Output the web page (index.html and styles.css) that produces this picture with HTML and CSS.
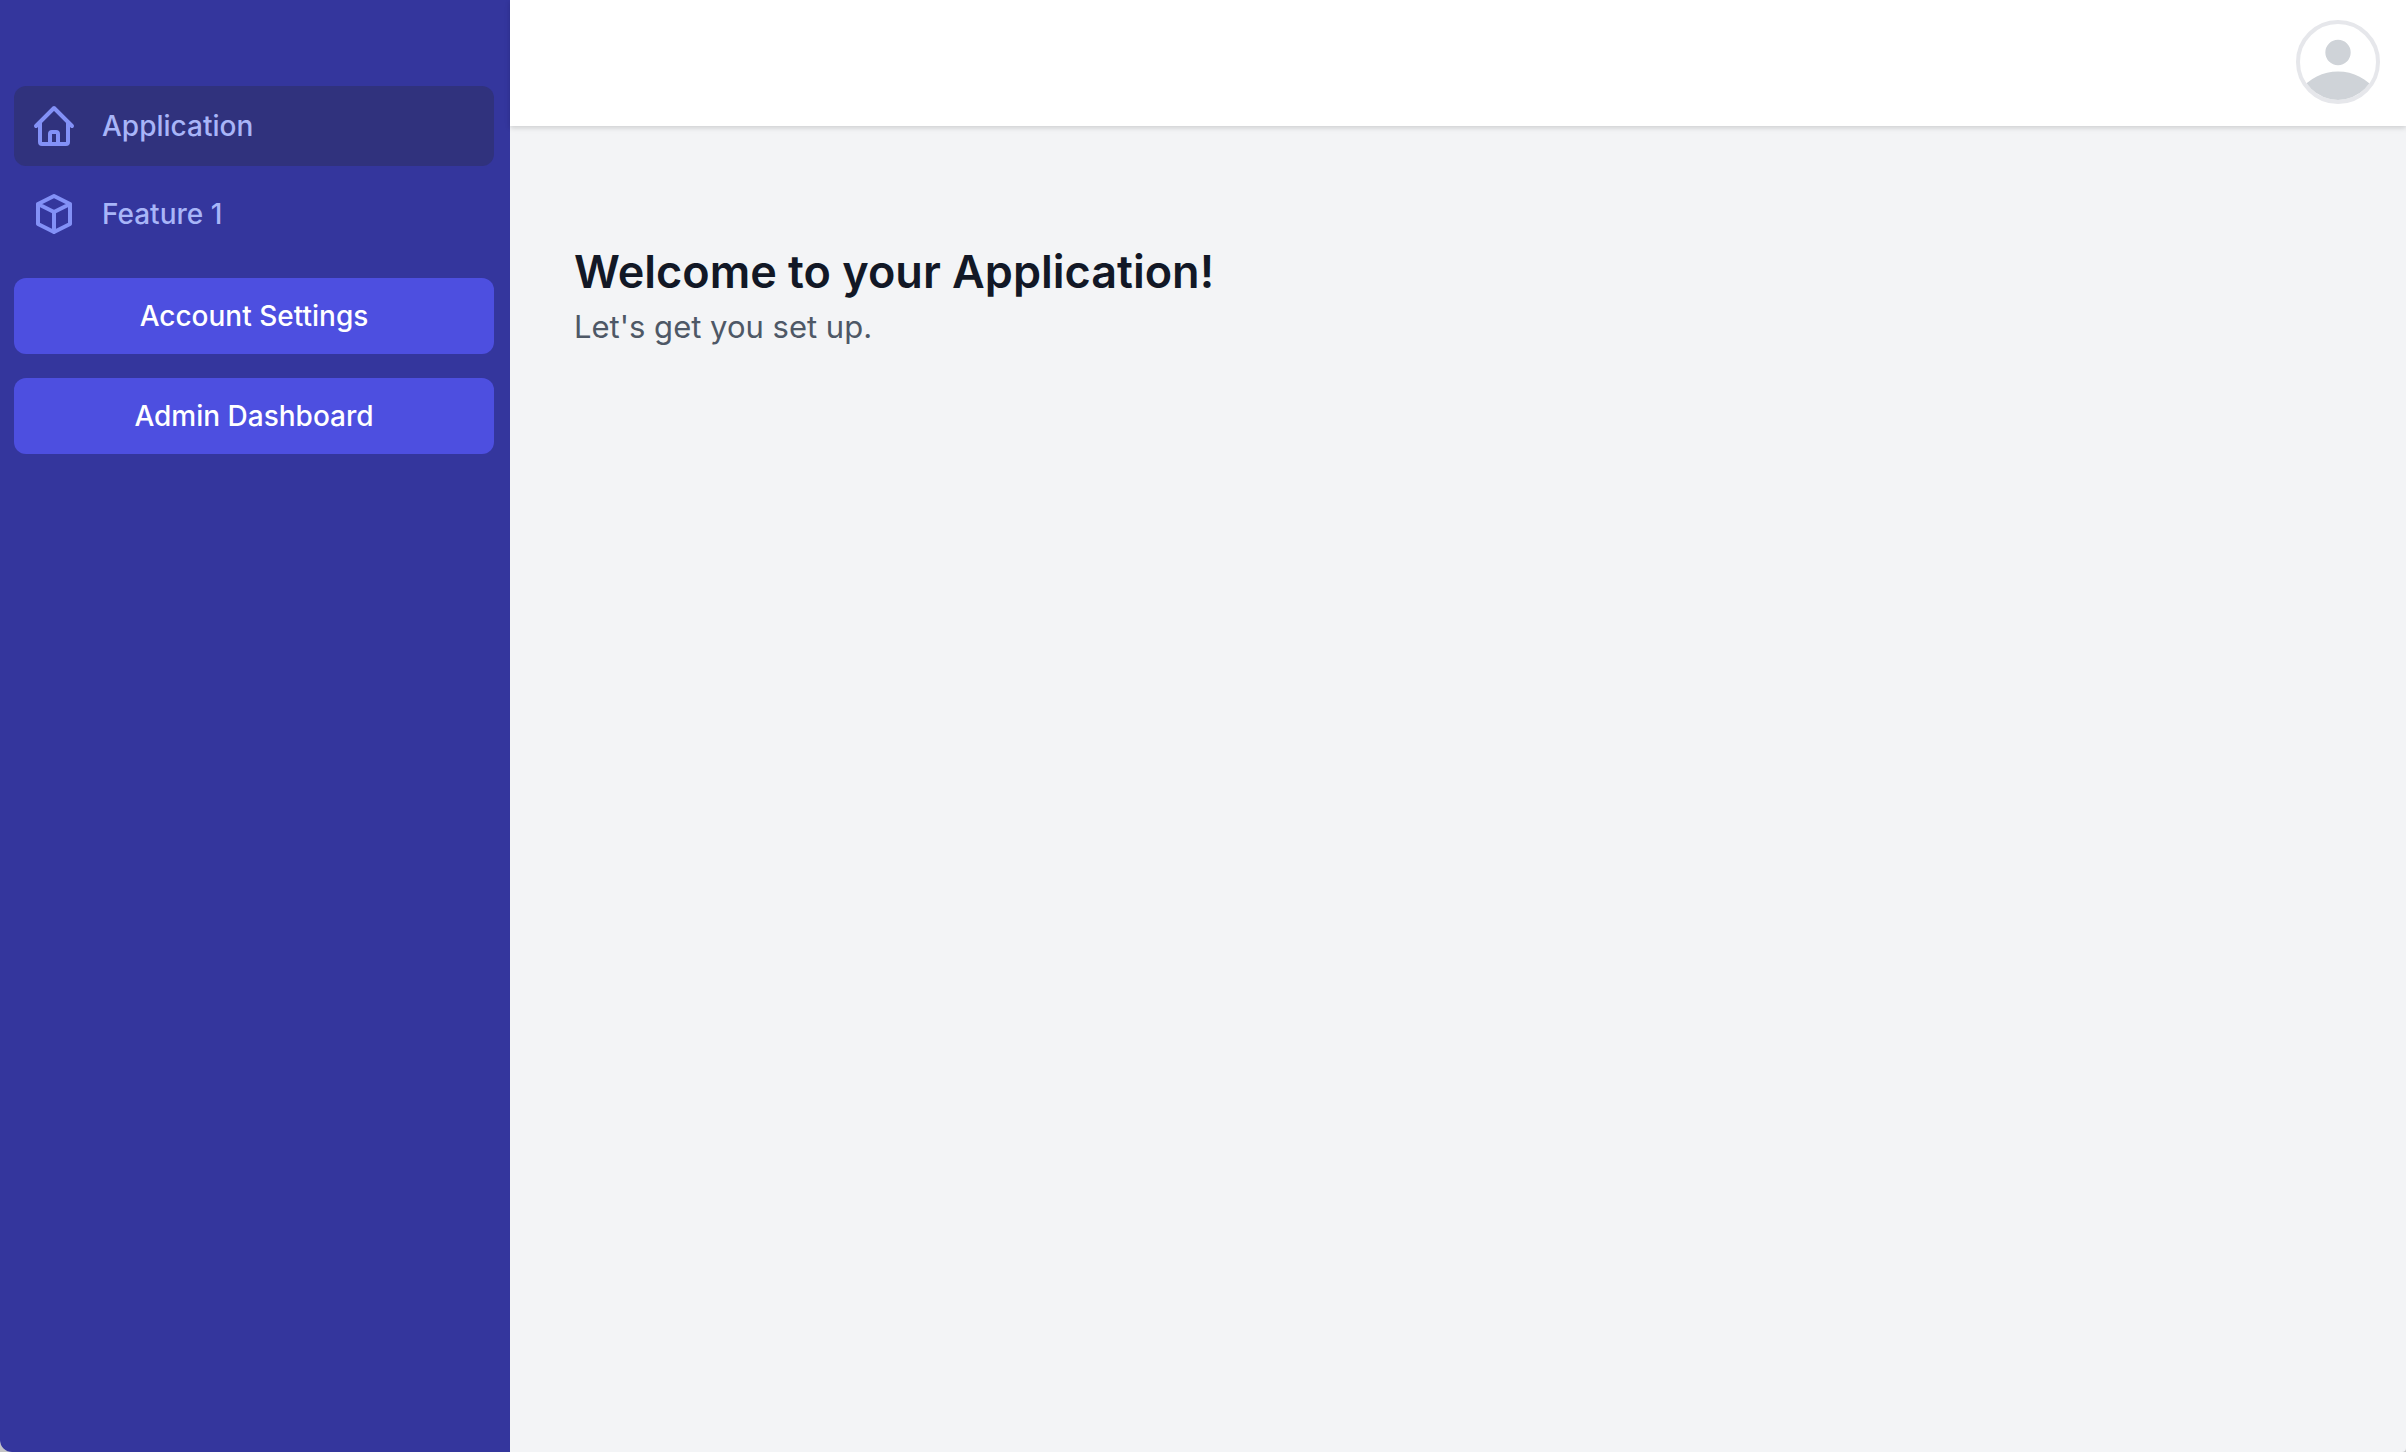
FILE: index.html
```html
<!DOCTYPE html>
<html lang="en">
<head>
  <meta charset="utf-8">
  <meta name="viewport" content="width=device-width, initial-scale=1">
  <title>Application</title>
  <link rel="stylesheet" href="styles.css">
</head>
<body>
  <div class="app">
    <aside class="sidebar">
      <nav class="nav" aria-label="Main">
        <a class="nav-link nav-link-active" href="#" aria-current="page">
          <svg class="nav-icon" viewBox="0 0 24 24" aria-hidden="true">
            <path d="M3 12l2-2m0 0l7-7 7 7M5 10v10a1 1 0 001 1h12a1 1 0 001-1V10m0 0l2 2M10 21v-5a1 1 0 011-1h2a1 1 0 011 1v5"/>
          </svg>
          Application
        </a>
        <a class="nav-link" href="#">
          <svg class="nav-icon" viewBox="0 0 24 24" aria-hidden="true">
            <path d="M20 7l-8-4-8 4m16 0l-8 4m8-4v10l-8 4m0-10L4 7m8 4v10M4 7v10l8 4"/>
          </svg>
          Feature 1
        </a>
      </nav>
      <div class="actions">
        <button class="button" type="button">Account Settings</button>
        <button class="button" type="button">Admin Dashboard</button>
      </div>
    </aside>
    <div class="page">
      <header class="topbar">
        <button class="avatar" type="button" aria-label="Open user menu">
          <svg class="avatar-icon" viewBox="0 0 24 24" aria-hidden="true">
            <path d="M24 20.993V24H0v-2.996A14.977 14.977 0 0112.004 15c4.904 0 9.26 2.354 11.996 5.993zM16.002 8.999a4 4 0 11-8 0 4 4 0 018 0z"/>
          </svg>
        </button>
      </header>
      <main class="content">
        <h1 class="title">Welcome to your Application!</h1>
        <p class="subtitle">Let's get you set up.</p>
      </main>
    </div>
  </div>
</body>
</html>
```
FILE: styles.css
```css
* {
  box-sizing: border-box;
}

html {
  background: #c4c4c6;
}

body {
  margin: 0;
  font-family: Inter, "Liberation Sans", sans-serif;
  font-size: 28px;
  line-height: 40px;
}

.app {
  display: flex;
  min-height: 100vh;
  overflow: hidden;
  border-radius: 0 0 4px 12px;
  background: #f3f4f6;
}

.sidebar {
  display: flex;
  flex: 0 0 510px;
  flex-direction: column;
  gap: 24px;
  padding: 86px 16px 32px 14px;
  background: #34369d;
}

.nav {
  display: flex;
  flex-direction: column;
  gap: 8px;
}

.nav-link {
  display: flex;
  align-items: center;
  gap: 24px;
  padding: 16px;
  border-radius: 12px;
  color: #a8b5f8;
  font-weight: 500;
  line-height: 48px;
  text-decoration: none;
}

.nav-link-active {
  background: #30327d;
}

.nav-icon {
  width: 48px;
  height: 48px;
  fill: none;
  stroke: #8391f7;
  stroke-width: 2;
  stroke-linecap: round;
  stroke-linejoin: round;
}

.actions {
  display: flex;
  flex-direction: column;
  gap: 24px;
}

.button {
  padding: 18px;
  border: 0;
  border-radius: 12px;
  background: #4d4fe0;
  color: #fff;
  font: inherit;
  font-weight: 500;
}

.page {
  flex: 1;
  min-width: 0;
}

.topbar {
  display: flex;
  justify-content: flex-end;
  padding: 20px 26px 22px;
  background: #fff;
  box-shadow: 0 2px 6px rgba(0, 0, 0, 0.1), 0 2px 4px rgba(0, 0, 0, 0.06);
}

.avatar {
  width: 84px;
  height: 84px;
  padding: 0;
  overflow: hidden;
  border: 4px solid #e6e7eb;
  border-radius: 50%;
  background: #fff;
}

.avatar-icon {
  display: block;
  width: 100%;
  height: 100%;
  fill: #cfd3d8;
}

.content {
  padding: 114px 64px;
}

.title {
  margin: 0;
  color: #121826;
  font-size: 45px;
  font-weight: 600;
  line-height: 64px;
}

.subtitle {
  margin: 0;
  color: #4e5866;
  font-size: 31px;
  line-height: 46px;
}
```
